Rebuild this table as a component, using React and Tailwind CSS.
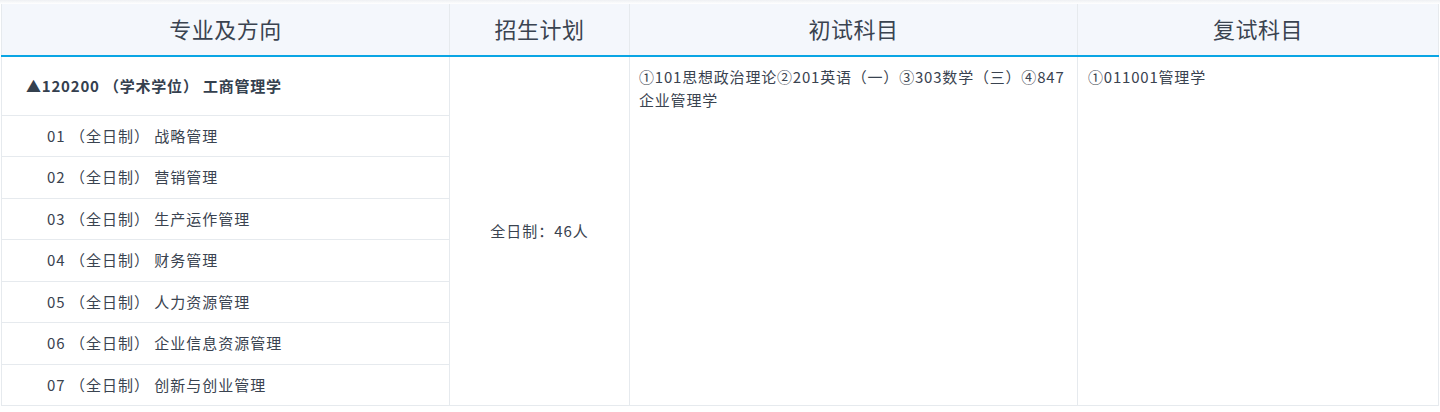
export default function App() {
  const subs = [
    "01 （全日制） 战略管理",
    "02 （全日制） 营销管理",
    "03 （全日制） 生产运作管理",
    "04 （全日制） 财务管理",
    "05 （全日制） 人力资源管理",
    "06 （全日制） 企业信息资源管理",
    "07 （全日制） 创新与创业管理",
  ];
  const font = { fontFamily: '"Noto Sans CJK SC", "Noto Sans", sans-serif' };
  return (
    <div className="w-[1440px] h-[412px] bg-white pt-[4px] pl-[1px] bg-gradient-to-b from-[#eef0f3] to-white to-[4px]" style={font}>
      <table className="table-fixed border-collapse w-[1437px] text-[#333] bg-white">
        <colgroup>
          <col className="w-[448px]" />
          <col className="w-[180px]" />
          <col className="w-[448px]" />
          <col className="w-[361px]" />
        </colgroup>
        <thead>
          <tr className="h-[52px] bg-[#f4f7fc] border-b-2 border-[#0aa5e4]">
            {["专业及方向", "招生计划", "初试科目", "复试科目"].map((t) => (
              <th key={t} className="border-x border-[#e6eaee] font-normal text-[22px] tracking-[0.5px] text-[#3a4350] text-center align-middle pb-[2px]">
                {t}
              </th>
            ))}
          </tr>
        </thead>
        <tbody>
          <tr className="h-[59px]">
            <td className="border border-[#e6eaee] pl-[24px] text-[15px] tracking-[0.8px] font-bold text-[#34404e] align-middle">
              ▲120200 （学术学位） 工商管理学
            </td>
            <td rowSpan={8} className="border border-[#e6eaee] text-center align-middle text-[15px] tracking-[1px] text-[#3a4350]">
              全日制：46人
            </td>
            <td rowSpan={8} className="border border-[#e6eaee] align-top px-[9px] pt-[8px] text-[15px] tracking-[0.8px] leading-[23px] text-[#3a4350]">
              ①101思想政治理论②201英语（一）③303数学（三）④847企业管理学
            </td>
            <td rowSpan={8} className="border border-[#e6eaee] align-top px-[10px] pt-[8px] text-[15px] tracking-[0.8px] leading-[23px] text-[#3a4350]">
              ①011001管理学
            </td>
          </tr>
          {subs.map((s) => (
            <tr key={s} className="h-[41.5px]">
              <td className="border border-[#e6eaee] pl-[45px] text-[15px] tracking-[1px] text-[#3a4350] align-middle whitespace-pre">
                {s}
              </td>
            </tr>
          ))}
        </tbody>
      </table>
    </div>
  );
}
